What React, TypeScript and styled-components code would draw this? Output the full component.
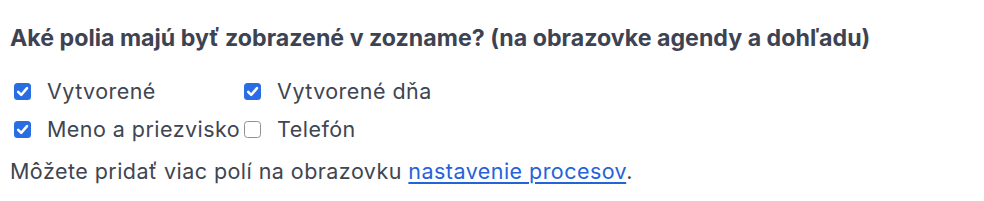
import styled, { createGlobalStyle } from "styled-components";

const GlobalStyle = createGlobalStyle`
    body {
        margin: 0;
        background: #ffffff;
        font-family: Inter, "Noto Sans", "Liberation Sans", sans-serif;
        color: #404552;
    }
`;

const Wrapper = styled.div`
    padding: 23px 10px 0;
`;

const Title = styled.h3`
    margin: 0 0 19px;
    font-size: 23.2px;
    line-height: 30px;
    font-weight: 700;
    color: #3d4352;
`;

const FieldGrid = styled.div`
    display: grid;
    grid-template-columns: repeat(2, max-content);
`;

const Option = styled.label`
    display: flex;
    align-items: center;
    height: 38px;
    font-size: 21.5px;
    letter-spacing: 0.45px;
    cursor: pointer;
`;

const Box = styled.span<{ $checked: boolean }>`
    display: inline-flex;
    align-items: center;
    justify-content: center;
    flex: none;
    width: 17px;
    height: 17px;
    margin: 0 16px 0 4px;
    box-sizing: border-box;
    border-radius: 3.5px;
    background: ${(p) => (p.$checked ? "#2a6de3" : "#ffffff")};
    border: ${(p) => (p.$checked ? "none" : "1px solid #8d8f94")};
`;

const Hint = styled.p`
    margin: 3px 0 0;
    font-size: 21.5px;
    letter-spacing: 0.45px;
    line-height: 40px;
`;

const Link = styled.a`
    color: #2563d9;
    text-decoration: underline;
    text-underline-offset: 3px;
`;

const fields = [
    { label: "Vytvorené", checked: true },
    { label: "Vytvorené dňa", checked: true },
    { label: "Meno a priezvisko", checked: true },
    { label: "Telefón", checked: false },
];

function CheckBox({ checked }: { checked: boolean }) {
    return (
        <Box $checked={checked}>
            {checked && (
                <svg width="13" height="13" viewBox="0 0 12 12">
                    <path d="M2 6.3 L4.8 9.1 L10.2 2.9" fill="none" stroke="#fff" strokeWidth="2.3" strokeLinecap="round" strokeLinejoin="round" />
                </svg>
            )}
        </Box>
    );
}

export default function App() {
    return (
        <>
            <GlobalStyle />
            <Wrapper>
                <Title>Aké polia majú byť zobrazené v zozname? (na obrazovke agendy a dohľadu)</Title>
                <FieldGrid>
                    {fields.map((f) => (
                        <Option key={f.label}>
                            <CheckBox checked={f.checked} />
                            {f.label}
                        </Option>
                    ))}
                </FieldGrid>
                <Hint>
                    Môžete pridať viac polí na obrazovku <Link href="#">nastavenie procesov</Link>.
                </Hint>
            </Wrapper>
        </>
    );
}
